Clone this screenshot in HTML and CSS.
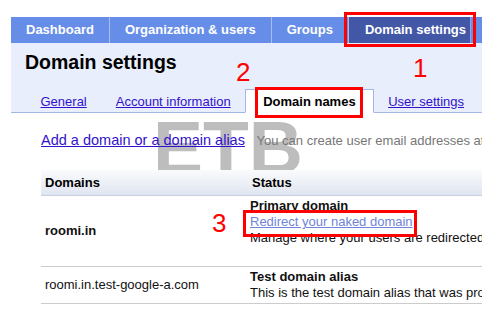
FILE: index.html
```html
<!DOCTYPE html>
<html>
<head>
<meta charset="utf-8">
<link rel="stylesheet" href="styles.css">
</head>
<body>
<div class="page">
  <nav class="topnav">
    <a class="nav-item">Dashboard</a>
    <a class="nav-item">Organization &amp; users</a>
    <a class="nav-item">Groups</a>
    <a class="nav-item nav-active">Domain settings</a>
  </nav>
  <div class="header-area">
    <h1 class="title">Domain settings</h1>
    <ul class="subtabs">
      <li class="subtab"><a class="link">General</a></li>
      <li class="subtab"><a class="link">Account information</a></li>
      <li class="subtab subtab-active">Domain names</li>
      <li class="subtab"><a class="link">User settings</a></li>
    </ul>
  </div>
  <div class="content">
    <div class="watermark">ETB</div>
    <p class="add-line"><a class="link add-link">Add a domain or a domain alias</a> <span class="hint">You can create user email addresses at any of these domains.</span></p>
    <table class="domains">
      <thead>
        <tr><th class="col-domain">Domains</th><th class="col-status">Status</th></tr>
      </thead>
      <tbody>
        <tr class="row-primary">
          <td class="cell-domain strong">roomi.in</td>
          <td class="cell-status">
            <div class="strong">Primary domain</div>
            <div><a class="link light-link">Redirect your naked domain</a></div>
            <div>Manage where your users are redirected when they access your naked domain.</div>
          </td>
        </tr>
        <tr class="row-alias">
          <td class="cell-domain">roomi.in.test-google-a.com</td>
          <td class="cell-status">
            <div class="strong">Test domain alias</div>
            <div>This is the test domain alias that was provided to you when you signed up.</div>
          </td>
        </tr>
      </tbody>
    </table>
  </div>
</div>
<div class="mark box-1"></div>
<div class="mark box-2"></div>
<div class="mark box-3"></div>
<div class="num num-1">1</div>
<div class="num num-2">2</div>
<div class="num num-3">3</div>
</body>
</html>
```

FILE: styles.css
```css
html, body {
  margin: 0;
  padding: 0;
  background: #ffffff;
  overflow: hidden;
  width: 482px;
  height: 317px;
}
body {
  font-family: Arial, "Liberation Sans", sans-serif;
  font-size: 13px;
  color: #000;
}
.page {
  margin-left: 11px;
  padding-top: 17px;
  width: 760px;
}
.topnav {
  display: flex;
  height: 26px;
  background: #668ee9;
}
.nav-item {
  display: block;
  padding: 0 15px;
  line-height: 26px;
  font-weight: bold;
  font-size: 13px;
  color: #ffffff;
  border-right: 1px solid #a6bdf2;
  white-space: nowrap;
}
.nav-active {
  background: #4357a7;
  padding: 0 4px 0 16px;
  border-right: 1px solid #8ea7ea;
}
.header-area {
  background: #e8eefb;
  padding-top: 7px;
}
.title {
  margin: 0;
  padding-left: 14px;
  font-size: 19.5px;
  line-height: 24px;
  font-weight: bold;
  color: #000;
}
.subtabs {
  list-style: none;
  margin: 15px 0 0 0;
  padding: 0 0 0 15px;
  display: flex;
  align-items: flex-end;
  border-bottom: 1px solid #a3b6e6;
}
.subtab {
  padding: 4px 13.5px 2px;
  border: 1px solid transparent;
  border-bottom: none;
  line-height: 16px;
  white-space: nowrap;
}
.subtab-active {
  background: #ffffff;
  border: 1px solid #a3b6e6;
  border-bottom: 1px solid #ffffff;
  margin-bottom: -1px;
  padding: 4px 17px 2px;
  font-weight: bold;
  color: #000;
}
.link {
  color: #3311cc;
  text-decoration: underline;
}
.content {
  position: relative;
  background: #ffffff;
}
.watermark {
  position: absolute;
  left: 142px;
  top: -3px;
  font-size: 75px;
  line-height: 74px;
  font-weight: bold;
  color: #bdbdbd;
  z-index: 0;
}
.add-line {
  position: relative;
  z-index: 1;
  margin: 0;
  padding: 18px 0 0 30px;
  line-height: 18px;
  white-space: nowrap;
}
.add-link {
  font-size: 14.5px;
}
.hint {
  color: #777777;
  margin-left: 8px;
}
.domains {
  position: relative;
  z-index: 1;
  margin: 20px 0 0 30px;
  border-collapse: collapse;
  width: 720px;
}
.domains th {
  height: 25px;
  padding: 0 4px;
  text-align: left;
  font-weight: bold;
  font-size: 13px;
  background: linear-gradient(#fafbfd, #dfe5f0);
  border-bottom: 1px solid #c8d0df;
  white-space: nowrap;
}
.domains th.col-domain {
  width: 198px;
}
.domains th.col-status {
  padding-left: 5px;
}
.domains td {
  border-bottom: 1px solid #cccccc;
  white-space: nowrap;
  line-height: 16px;
  color: #111;
}
.cell-domain {
  padding: 0 4px;
  vertical-align: middle;
}
.cell-status {
  padding: 2px 3px 0;
  vertical-align: top;
}
.row-primary td {
  height: 71px;
  box-sizing: border-box;
}
.row-alias td {
  height: 37px;
  box-sizing: border-box;
}
.strong {
  font-weight: bold;
}
.light-link {
  color: #6f84d8;
}
.mark {
  position: absolute;
  box-sizing: border-box;
  border: 3px solid #ff0000;
  z-index: 5;
}
.box-1 { left: 344px; top: 12px; width: 132px; height: 35px; }
.box-2 { left: 255px; top: 87px; width: 108px; height: 31px; }
.box-3 { left: 243px; top: 210px; width: 174px; height: 27px; }
.num {
  position: absolute;
  z-index: 5;
  font-family: Arial, "Liberation Sans", sans-serif;
  font-size: 26px;
  line-height: 26px;
  color: #ff0000;
}
.num-1 { left: 413px; top: 55px; }
.num-2 { left: 236px; top: 59px; }
.num-3 { left: 212px; top: 210px; }
```
